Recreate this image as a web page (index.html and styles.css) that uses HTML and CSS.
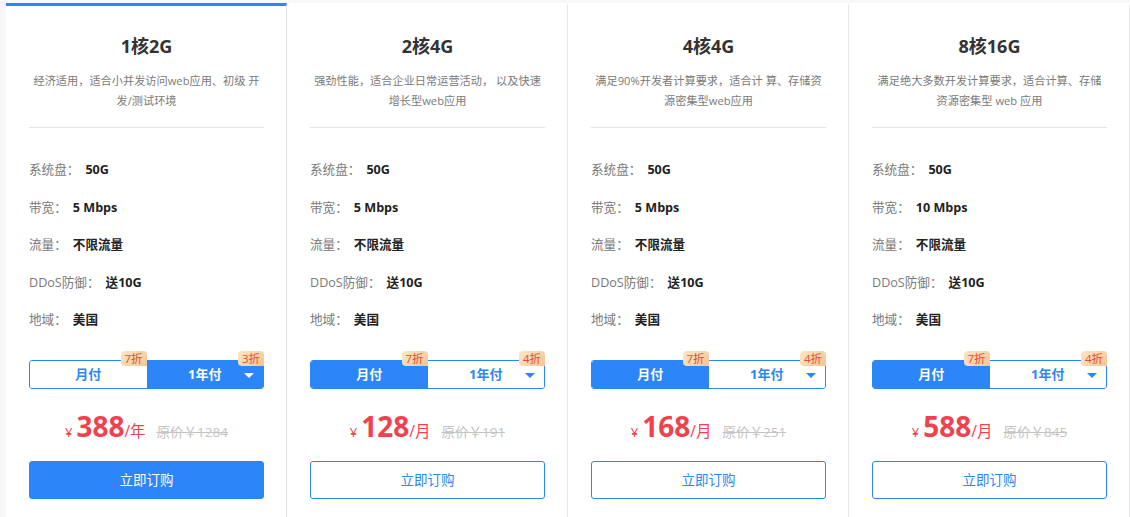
FILE: index.html
```html
<!DOCTYPE html>
<html lang="zh-CN">
<head>
<meta charset="utf-8">
<title>云服务器套餐</title>
<link rel="stylesheet" href="styles.css">
</head>
<body>
<div class="plans">
  <div class="plan active">
    <h3 class="plan-title">1核2G</h3>
    <p class="plan-desc">经济适用，适合小并发访问web应用、初级 开<br>发/测试环境</p>
    <ul class="specs">
      <li><span class="label">系统盘：</span><span class="value">50G</span></li>
      <li><span class="label">带宽：</span><span class="value">5 Mbps</span></li>
      <li><span class="label">流量：</span><span class="value">不限流量</span></li>
      <li><span class="label">DDoS防御：</span><span class="value">送10G</span></li>
      <li><span class="label">地域：</span><span class="value">美国</span></li>
    </ul>
    <div class="toggle">
      <div class="opt">月付<span class="badge">7折</span></div>
      <div class="opt on">1年付<span class="caret"></span><span class="badge">3折</span></div>
    </div>
    <div class="price"><span class="cur">¥</span><span class="amt">388</span><span class="unit">/年</span><span class="orig">原价￥1284</span></div>
    <a class="buy primary">立即订购</a>
  </div>

  <div class="plan">
    <h3 class="plan-title">2核4G</h3>
    <p class="plan-desc">强劲性能，适合企业日常运营活动， 以及快速<br>增长型web应用</p>
    <ul class="specs">
      <li><span class="label">系统盘：</span><span class="value">50G</span></li>
      <li><span class="label">带宽：</span><span class="value">5 Mbps</span></li>
      <li><span class="label">流量：</span><span class="value">不限流量</span></li>
      <li><span class="label">DDoS防御：</span><span class="value">送10G</span></li>
      <li><span class="label">地域：</span><span class="value">美国</span></li>
    </ul>
    <div class="toggle">
      <div class="opt on">月付<span class="badge">7折</span></div>
      <div class="opt">1年付<span class="caret"></span><span class="badge">4折</span></div>
    </div>
    <div class="price"><span class="cur">¥</span><span class="amt">128</span><span class="unit">/月</span><span class="orig">原价￥191</span></div>
    <a class="buy">立即订购</a>
  </div>

  <div class="plan">
    <h3 class="plan-title">4核4G</h3>
    <p class="plan-desc">满足90%开发者计算要求，适合计 算、存储资<br>源密集型web应用</p>
    <ul class="specs">
      <li><span class="label">系统盘：</span><span class="value">50G</span></li>
      <li><span class="label">带宽：</span><span class="value">5 Mbps</span></li>
      <li><span class="label">流量：</span><span class="value">不限流量</span></li>
      <li><span class="label">DDoS防御：</span><span class="value">送10G</span></li>
      <li><span class="label">地域：</span><span class="value">美国</span></li>
    </ul>
    <div class="toggle">
      <div class="opt on">月付<span class="badge">7折</span></div>
      <div class="opt">1年付<span class="caret"></span><span class="badge">4折</span></div>
    </div>
    <div class="price"><span class="cur">¥</span><span class="amt">168</span><span class="unit">/月</span><span class="orig">原价￥251</span></div>
    <a class="buy">立即订购</a>
  </div>

  <div class="plan">
    <h3 class="plan-title">8核16G</h3>
    <p class="plan-desc">满足绝大多数开发计算要求，适合计算、存储<br>资源密集型 web 应用</p>
    <ul class="specs">
      <li><span class="label">系统盘：</span><span class="value">50G</span></li>
      <li><span class="label">带宽：</span><span class="value">10 Mbps</span></li>
      <li><span class="label">流量：</span><span class="value">不限流量</span></li>
      <li><span class="label">DDoS防御：</span><span class="value">送10G</span></li>
      <li><span class="label">地域：</span><span class="value">美国</span></li>
    </ul>
    <div class="toggle">
      <div class="opt on">月付<span class="badge">7折</span></div>
      <div class="opt">1年付<span class="caret"></span><span class="badge">4折</span></div>
    </div>
    <div class="price"><span class="cur">¥</span><span class="amt">588</span><span class="unit">/月</span><span class="orig">原价￥845</span></div>
    <a class="buy">立即订购</a>
  </div>
</div>
</body>
</html>
```

FILE: styles.css
```css
* { box-sizing: border-box; }

html, body {
  margin: 0;
  padding: 0;
  background: #f7f8fa;
  font-family: "Open Sans", "Noto Sans CJK SC", sans-serif;
  color: #333;
  overflow: hidden;
}

.plans {
  display: flex;
  padding: 3px 0 0 6px;
}

.plan {
  width: 281px;
  flex: none;
  background: #fff;
  border-top: 3px solid transparent;
  border-right: 1px solid #e6e6e6;
  padding: 28px 22px 24px 23px;
}

.plan.active {
  border-top-color: #2d86f7;
}

.plan-title {
  margin: 0;
  text-align: center;
  font-size: 18px;
  line-height: 24px;
  font-weight: 700;
  color: #333;
}

.plan-desc {
  margin: 13px 0 0;
  padding-bottom: 16px;
  border-bottom: 1px solid #e6e6e6;
  text-align: center;
  font-size: 11.2px;
  line-height: 20px;
  color: #7a7a7a;
}

.specs {
  list-style: none;
  margin: 0;
  padding: 23px 0 0 0;
}

.specs li {
  font-size: 12.6px;
  line-height: 37.5px;
  height: 37.5px;
  white-space: nowrap;
}

.label {
  color: #7a7a7a;
  margin-right: 6px;
}

.value {
  color: #222;
  font-weight: 700;
}

.toggle {
  margin-top: 21px;
  height: 29px;
  display: grid;
  grid-template-columns: 1fr 1fr;
  border: 1px solid #2d86f7;
  border-radius: 3px;
}

.opt {
  position: relative;
  text-align: center;
  font-size: 13px;
  font-weight: 700;
  line-height: 27px;
  color: #2d86f7;
  background: #fff;
}

.opt:first-child { border-radius: 2px 0 0 2px; }
.opt:last-child { border-radius: 0 2px 2px 0; }

.opt.on {
  background: #2d86f7;
  color: #fff;
}

.badge {
  position: absolute;
  top: -10px;
  right: -1px;
  width: 26px;
  height: 15px;
  line-height: 15px;
  font-size: 11.5px;
  font-weight: 400;
  text-align: center;
  color: #e84a35;
  background: linear-gradient(135deg, #fde6c4 0%, #f6c594 100%);
  border-radius: 4px 4px 0 4px;
}

.opt:first-child .badge { right: 0; }

.caret {
  position: absolute;
  right: 9px;
  top: 12px;
  width: 0;
  height: 0;
  border-left: 5px solid transparent;
  border-right: 5px solid transparent;
  border-top: 5px solid #2d86f7;
}

.opt.on .caret { border-top-color: #fff; }

.price {
  margin-top: 17px;
  height: 40px;
  display: flex;
  justify-content: center;
  align-items: baseline;
  color: #f0424e;
  white-space: nowrap;
}

.cur {
  font-size: 13px;
  margin-right: 4px;
}

.amt {
  font-size: 28px;
  font-weight: 700;
  line-height: 40px;
}

.unit {
  font-size: 15.5px;
}

.orig {
  margin-left: 11px;
  font-size: 13.5px;
  color: #c4c4c4;
  text-decoration: line-through;
}

.buy {
  display: block;
  margin-top: 15px;
  height: 38px;
  line-height: 36px;
  text-align: center;
  font-size: 13.5px;
  color: #2d86f7;
  border: 1px solid #2d86f7;
  border-radius: 3px;
  background: #fff;
  cursor: pointer;
}

.buy.primary {
  background: #2d86f7;
  color: #fff;
}
```
